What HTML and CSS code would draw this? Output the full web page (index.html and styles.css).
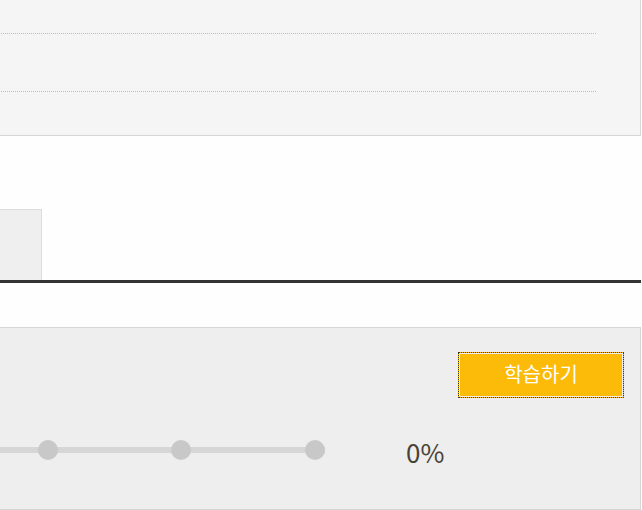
FILE: index.html
```html
<html>

<head>
    <title>학습 현황</title>
    <meta name="viewport" content="width=device-width, initial-scale=1.0">
    <link rel="stylesheet" href="styles.css">
</head>

<body>
    <div id="wrap">
        <div class="info-box">
            <div class="info-line"></div>
            <div class="info-line"></div>
        </div>

        <div class="tab-row">
            <div class="tab-item"></div>
        </div>

        <div class="course-box">
            <div class="course-top">
                <button class="study-btn">학습하기</button>
            </div>
            <div class="progress-row">
                <div class="progress-track">
                    <span class="dot"></span>
                    <span class="dot"></span>
                    <span class="dot"></span>
                    <span class="dot"></span>
                    <span class="dot"></span>
                </div>
                <div class="progress-rate">0%</div>
            </div>
        </div>
    </div>
</body>

</html>
```

FILE: styles.css
```css
body {
    margin: 0;
    background-color: #fefefe;
    font-family: "Noto Sans CJK KR", "Noto Sans", sans-serif;
    overflow: hidden;
}

#wrap {
    width: 941px;
    margin-left: -300px;
}

.info-box {
    height: 136px;
    padding: 33px 44px 0 0;
    box-sizing: border-box;
    background-color: #f5f5f5;
    border-right: 1px solid #d9d9d9;
    border-bottom: 1px solid #d6d6d6;
}

.info-line {
    height: 57px;
    border-top: 1px dotted #bcbcbc;
}

.tab-row {
    display: flex;
    margin-top: 73px;
    border-bottom: 3px solid #333333;
}

.tab-item {
    width: 340px;
    height: 70px;
    background-color: #efefef;
    border: 1px solid #dcdcdc;
    border-bottom: none;
}

.course-box {
    margin-top: 44px;
    height: 183px;
    box-sizing: border-box;
    background-color: #eeeeee;
    border: 1px solid #d6d6d6;
}

.course-top {
    display: flex;
    justify-content: flex-end;
    padding: 24px 16px 0 0;
}

.study-btn {
    width: 166px;
    height: 46px;
    border: 1px dotted #333333;
    background-color: #fcbb08;
    box-shadow: inset 0 0 0 1px #eeeeee;
    color: #ffffff;
    font-family: "Noto Sans CJK KR", sans-serif;
    font-size: 20px;
    padding: 0 0 3px 0;
}

.progress-row {
    display: flex;
    align-items: flex-start;
    margin-top: 42px;
}

.progress-track {
    display: flex;
    justify-content: space-between;
    align-items: center;
    width: 555px;
    margin-left: 69px;
    height: 20px;
    background: linear-gradient(#d6d6d6, #d6d6d6) center / 100% 6px no-repeat;
}

.dot {
    width: 20px;
    height: 20px;
    border-radius: 50%;
    background-color: #c8c8c8;
}

.progress-rate {
    margin-left: 81px;
    margin-top: 2px;
    line-height: 20px;
    font-size: 26px;
    color: #4b4237;
}
```
